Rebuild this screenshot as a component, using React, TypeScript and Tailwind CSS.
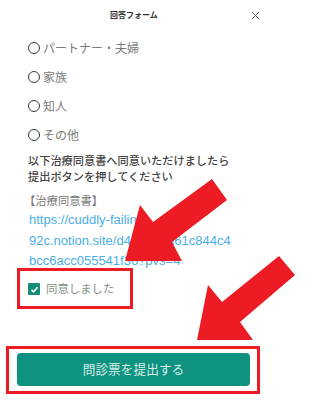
import React from 'react';

const jp = '"Noto Sans CJK JP", "Noto Sans", sans-serif';
const latin = '"Liberation Sans", Arial, sans-serif';

const options = ['パートナー・夫婦', '家族', '知人', 'その他'];

// 赤い矢印（注釈）
const Arrows = () => (
  <svg className="pointer-events-none absolute left-0 top-0" width="300" height="400" viewBox="0 0 300 400">
    <polygon
      points="212,179 227,200 172,242 182,261 125,261 140,205 153,222"
      fill="#ed1c24"
    />
    <polygon
      points="279,256 295,275 240,322 253,340 197,340 208,285 222,302"
      fill="#ed1c24"
    />
  </svg>
);

const Radio = ({ label }: { label: string }) => (
  <div className="flex h-[29px] items-center">
    <span className="h-[12px] w-[12px] rounded-full border-[1.6px] border-[#383838]" />
    <span className="ml-[3px] text-[12px] text-[#7a7a7a]" style={{ fontFamily: jp }}>
      {label}
    </span>
  </div>
);

export default function App() {
  return (
    <div className="relative h-[400px] w-[300px] overflow-hidden bg-white" style={{ fontFamily: jp }}>
      <div className="w-[268px]">
        {/* ヘッダー */}
        <div className="relative flex h-[30px] items-center justify-center">
          <span className="text-[8px] font-bold text-[#333]">回答フォーム</span>
          <svg
            className="absolute left-[251px] top-[11px]"
            width="9"
            height="9"
            viewBox="0 0 9 9"
          >
            <path d="M1 1 L8 8 M8 1 L1 8" stroke="#555" strokeWidth="0.9" />
          </svg>
        </div>

        <div className="mt-[3.5px] px-[28px]">
          {options.map((o) => (
            <Radio key={o} label={o} />
          ))}
        </div>

        <div className="mt-[2px] px-[28px] text-[11.2px] font-medium leading-[16px] text-[#444]">
          <p>以下治療同意書へ同意いただけましたら</p>
          <p>提出ボタンを押してください</p>
        </div>

        <div className="mt-[6px] pl-[24px] text-[11.3px] leading-[20.5px] text-[#777]">
          【治療同意書】
        </div>
        <div
          className="pl-[29px] text-[13px] leading-[20.5px] text-[#4aaee8]"
          style={{ fontFamily: latin }}
        >
          <div>https://cuddly-failing-</div>
          <div>92c.notion.site/d48e2b0d61c844c4</div>
          <div>bcc6acc055541f36?pvs=4</div>
        </div>

        {/* 同意チェック */}
        <div className="-mt-[4px] ml-[17px] flex h-[41px] w-[116px] items-center border-[3px] border-[#ed1c24] pl-[8px] pt-[2px]">
          <span className="flex h-[12px] w-[12px] items-center justify-center rounded-[1px] bg-[#168c7b]">
            <svg width="9" height="9" viewBox="0 0 9 9">
              <path d="M1.5 4.8 L3.6 6.8 L7.6 2.2" stroke="#fff" strokeWidth="1.6" fill="none" />
            </svg>
          </span>
          <span className="ml-[6px] text-[11.4px] text-[#7f9184]">同意しました</span>
        </div>

        {/* 提出ボタン */}
        <div className="ml-[6px] mt-[37px] w-[254px] border-[3px] border-[#ed1c24] pb-[5px] pl-[8px] pr-[7px] pt-[4px]">
          <button className="flex h-[33px] w-full items-center justify-center rounded-[4px] bg-[#0f9280] text-[12.7px] text-[#d6eee8]">
            問診票を提出する
          </button>
        </div>
      </div>
      <Arrows />
    </div>
  );
}
